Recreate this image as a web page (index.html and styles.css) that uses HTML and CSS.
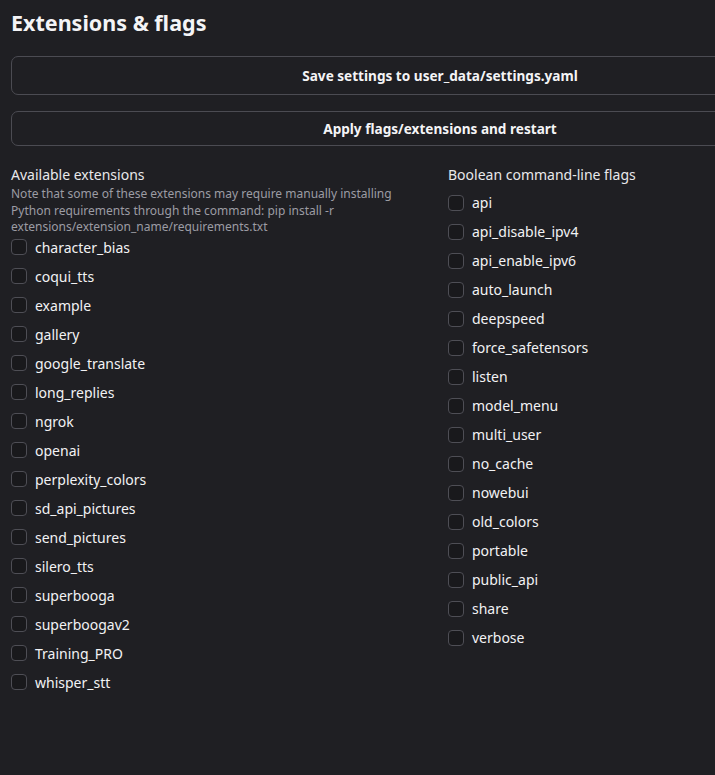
FILE: index.html
```html
<!DOCTYPE html>
<html>
<head>
<meta charset="utf-8">
<link rel="stylesheet" href="styles.css">
</head>
<body>
<div class="page">
  <h1 class="title">Extensions &amp; flags</h1>
  <button class="btn btn-save">Save settings to user_data/settings.yaml</button>
  <button class="btn btn-apply">Apply flags/extensions and restart</button>
  <div class="cols">
    <div class="col">
      <div class="label">Available extensions</div>
      <div class="note">Note that some of these extensions may require manually installing Python requirements through the command: pip install -r extensions/extension_name/requirements.txt</div>
      <ul class="checks checks-ext">
        <li><span class="box"></span>character_bias</li>
        <li><span class="box"></span>coqui_tts</li>
        <li><span class="box"></span>example</li>
        <li><span class="box"></span>gallery</li>
        <li><span class="box"></span>google_translate</li>
        <li><span class="box"></span>long_replies</li>
        <li><span class="box"></span>ngrok</li>
        <li><span class="box"></span>openai</li>
        <li><span class="box"></span>perplexity_colors</li>
        <li><span class="box"></span>sd_api_pictures</li>
        <li><span class="box"></span>send_pictures</li>
        <li><span class="box"></span>silero_tts</li>
        <li><span class="box"></span>superbooga</li>
        <li><span class="box"></span>superboogav2</li>
        <li><span class="box"></span>Training_PRO</li>
        <li><span class="box"></span>whisper_stt</li>
      </ul>
    </div>
    <div class="col">
      <div class="label">Boolean command-line flags</div>
      <ul class="checks checks-flags">
        <li><span class="box"></span>api</li>
        <li><span class="box"></span>api_disable_ipv4</li>
        <li><span class="box"></span>api_enable_ipv6</li>
        <li><span class="box"></span>auto_launch</li>
        <li><span class="box"></span>deepspeed</li>
        <li><span class="box"></span>force_safetensors</li>
        <li><span class="box"></span>listen</li>
        <li><span class="box"></span>model_menu</li>
        <li><span class="box"></span>multi_user</li>
        <li><span class="box"></span>no_cache</li>
        <li><span class="box"></span>nowebui</li>
        <li><span class="box"></span>old_colors</li>
        <li><span class="box"></span>portable</li>
        <li><span class="box"></span>public_api</li>
        <li><span class="box"></span>share</li>
        <li><span class="box"></span>verbose</li>
      </ul>
    </div>
  </div>
</div>
</body>
</html>
```
FILE: styles.css
```css
html, body {
  margin: 0;
  padding: 0;
  background: #1f1f23;
  overflow: hidden;
}
body {
  font-family: "Noto Sans", "Open Sans", sans-serif;
  color: #f2f2f4;
  width: 715px;
  height: 775px;
}
.page {
  width: 858px;
  padding: 8px 0 0 11px;
}
.title {
  margin: 0 0 18px 0;
  font-size: 21.5px;
  font-weight: 700;
  line-height: 30px;
  color: #f4f4f6;
}
.btn {
  display: block;
  width: 858px;
  background: transparent;
  border: 1px solid #4b4b52;
  border-radius: 7px;
  color: #f4f4f6;
  font-family: inherit;
  font-size: 13.6px;
  font-weight: 700;
  padding: 0;
}
.btn-save {
  height: 39px;
  margin-bottom: 16px;
}
.btn-apply {
  height: 35px;
  margin-bottom: 19px;
}
.cols {
  display: grid;
  grid-template-columns: 421px 421px;
  column-gap: 16px;
}
.label {
  font-size: 14px;
  line-height: 20px;
  color: #e8e8ea;
}
.note {
  font-size: 12px;
  line-height: 16.5px;
  color: #9c9ca3;
  width: 410px;
  margin-top: 1px;
}
.checks {
  list-style: none;
  margin: 0;
  padding: 0;
}
.checks-ext {
  margin-top: -3px;
}
.checks-flags {
  margin-top: 3px;
}
.checks li {
  display: flex;
  align-items: center;
  height: 29px;
  font-size: 14px;
  color: #f2f2f4;
}
.box {
  box-sizing: border-box;
  width: 16px;
  height: 16px;
  border: 1px solid #4e4e55;
  border-radius: 4px;
  background: #19191c;
  margin-right: 8px;
  flex: none;
}
```
